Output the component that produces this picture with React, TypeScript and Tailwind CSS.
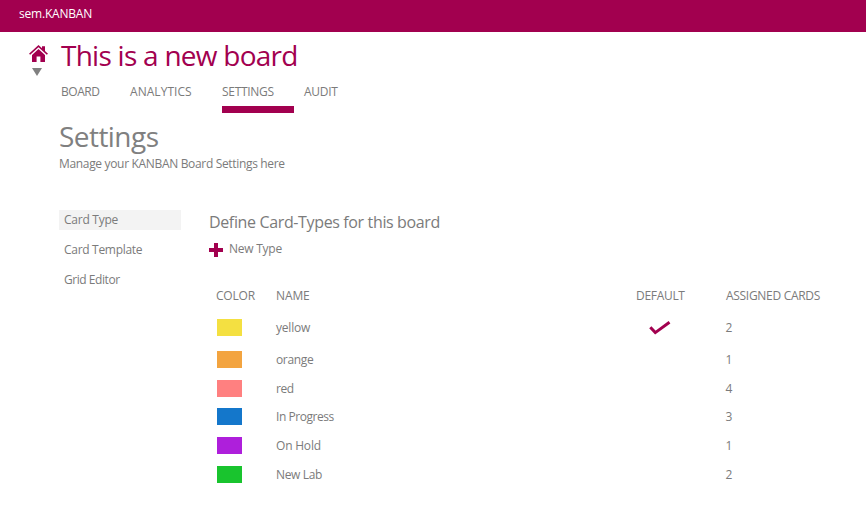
const rows = [
  { name: "yellow", color: "bg-[#f4e041]", height: "h-[35px]", count: 2, tracking: "tracking-[-0.2px]", isDefault: true },
  { name: "orange", color: "bg-[#f3a440]", height: "h-[29px]", count: 1, tracking: "tracking-[-0.35px]" },
  { name: "red", color: "bg-[#ff8080]", height: "h-[29px]", count: 4, tracking: "tracking-[-0.5px]" },
  { name: "In Progress", color: "bg-[#1477cb]", height: "h-[27px]", count: 3, tracking: "tracking-[-0.45px]" },
  { name: "On Hold", color: "bg-[#ae1fdb]", height: "h-[31px]", count: 1, tracking: "tracking-[-0.2px]" },
  { name: "New Lab", color: "bg-[#19c42e]", height: "h-[27px]", count: 2, tracking: "tracking-[-0.35px]" },
];

function HomeIcon() {
  return (
    <svg width="19" height="17" viewBox="0 0 19 17" className="block" fill="#a2004f">
      <path d="M9.5 0 L13 3.3 V1.2 H16 V6.1 L19 8.7 L17.8 9.8 L9.5 2.3 L1.2 9.8 L0 8.7 Z" />
      <path d="M9.5 4 L16 9.9 V17 H11.4 V11.5 H7.6 V17 H3 V9.9 Z" />
    </svg>
  );
}

export default function App() {
  return (
    <div className="h-[510px] w-[866px] overflow-hidden bg-white font-['Open_Sans','Noto_Sans',sans-serif] text-[12px] leading-4 whitespace-nowrap text-[#7b7b7b]">
      <header className="h-8 bg-[#a2004f] pt-[6px] pl-[19px] text-white">
        <span className="block tracking-[-0.2px]">sem.KANBAN</span>
      </header>

      <div className="flex h-[81px]">
        <div className="flex w-[61px] flex-col pt-[13px] pl-[29px]">
          <HomeIcon />
          <svg width="10" height="8" viewBox="0 0 10 8" className="mt-[6px] ml-[3px] block" fill="#808080">
            <path d="M0 0H10L5 8Z" />
          </svg>
        </div>
        <div>
          <h1 className="h-[52px] pt-[5px] text-[28px] leading-9 tracking-[-0.74px] text-[#a2004f]">This is a new board</h1>
          <nav className="flex">
            <span className="w-[69px] tracking-[-0.45px]">BOARD</span>
            <span className="w-[92px] tracking-[0.05px]">ANALYTICS</span>
            <span className="h-[29px] w-[72px] border-b-[7px] border-[#a2004f] tracking-[-0.3px]">SETTINGS</span>
            <span className="ml-[10px] tracking-[-0.3px]">AUDIT</span>
          </nav>
        </div>
      </div>

      <div className="h-[97px] pt-[5px] pl-[59px]">
        <h2 className="text-[28px] leading-9 tracking-[-0.55px] text-[#808080]">Settings</h2>
        <p className="pt-[2px] tracking-[-0.33px]">Manage your KANBAN Board Settings here</p>
      </div>

      <div className="flex pl-[59px]">
        <aside className="flex w-[122px] flex-col gap-[10px]">
          <span className="h-5 bg-[#f3f3f3] pt-[2px] pl-[5px] tracking-[-0.25px]">Card Type</span>
          <span className="h-5 pt-[2px] pl-[5px] tracking-[-0.3px]">Card Template</span>
          <span className="h-5 pt-[2px] pl-[5px] tracking-[-0.45px]">Grid Editor</span>
        </aside>
        <main className="ml-[28px] w-[657px]">
          <h3 className="text-[16px] leading-6 tracking-[-0.36px]">Define Card-Types for this board</h3>
          <div className="mt-[7px] flex items-center">
            <svg width="14" height="14" viewBox="0 0 14 14" className="mt-[2px] block" fill="#a2004f">
              <path d="M5 0H9V5H14V9H9V14H5V9H0V5H5Z" />
            </svg>
            <span className="ml-[6px] tracking-[-0.25px]">New Type</span>
          </div>
          <div className="mt-[31px] flex h-[22px] pl-[7px]">
            <span className="w-[60px] tracking-[-0.2px]">COLOR</span>
            <span className="w-[360px] tracking-[-0.1px]">NAME</span>
            <span className="w-[90px] tracking-[-0.3px]">DEFAULT</span>
            <span className="tracking-[-0.3px]">ASSIGNED CARDS</span>
          </div>
          {rows.map((row) => (
            <div key={row.name} className={`flex items-center pl-2 ${row.height}`}>
              <div className={`h-[17px] w-[25px] ${row.color}`} />
              <span className={`ml-[34px] w-[360px] pt-px ${row.tracking}`}>{row.name}</span>
              <div className="w-[90px] pl-[13px]">
                {row.isDefault && (
                  <svg width="22" height="14" viewBox="0 0 22 14" className="block" fill="none" stroke="#a2004f" strokeWidth="3">
                    <path d="M1.3 6.2L6.3 11.6L20.5 1.3" />
                  </svg>
                )}
              </div>
              <span className="-ml-[0.5px] pt-px">{row.count}</span>
            </div>
          ))}
        </main>
      </div>
    </div>
  );
}
